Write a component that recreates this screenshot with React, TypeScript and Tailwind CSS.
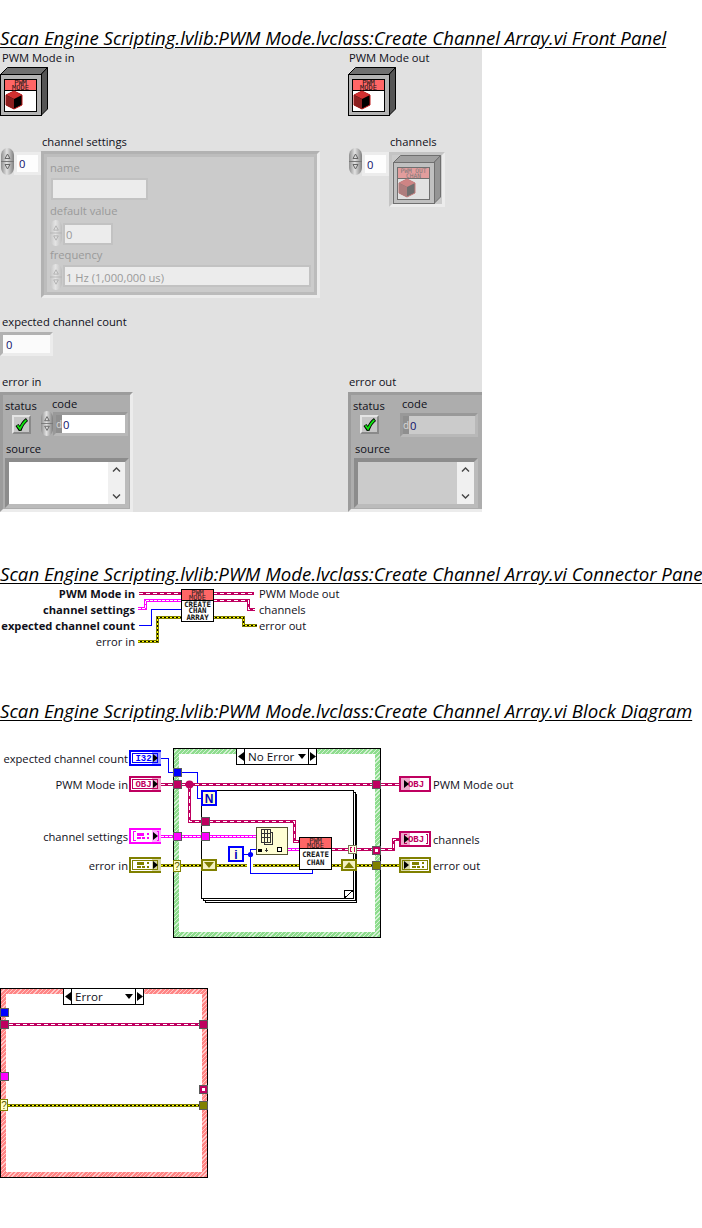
import React from "react";

const face = "font-['Open_Sans',sans-serif] text-[11.2px] whitespace-nowrap";
const lbl = `h-[16px] leading-[16px] text-[#10101a] ${face}`;
const bold = "h-[16px] leading-[16px] text-[#10101a] font-['Open_Sans',sans-serif] text-[11.2px] font-bold whitespace-nowrap";
const dim = `h-[16px] leading-[16px] text-[#9a9a9a] ${face}`;
const tag = `absolute h-[16px] leading-[16px] text-[#10101a] ${face}`;
const mono = "DejaVu Sans Mono, monospace";
const slab = "Liberation Mono, monospace";
const CLASS = "#bf0060";

function Heading({ children }: { children: React.ReactNode }) {
  return (
    <h2 className="h-[20px] whitespace-nowrap text-[18.65px] leading-[20px] italic underline underline-offset-[2px] font-['Open_Sans',sans-serif] text-black">
      {children}
    </h2>
  );
}

function Spinner({ className, faded }: { className: string; faded?: boolean }) {
  const id = faded ? "spinFaded" : "spinSolid";
  return (
    <svg viewBox="0 0 13 27" preserveAspectRatio="none" className={`shrink-0 ${className}`}>
      <defs>
        <linearGradient id={id} x1="0" x2="1" y1="0" y2="0">
          <stop offset="0" stopColor={faded ? "#c4c4c4" : "#8e8e8e"} />
          <stop offset="0.45" stopColor={faded ? "#e4e4e4" : "#e2e2e2"} />
          <stop offset="1" stopColor={faded ? "#bdbdbd" : "#7f7f7f"} />
        </linearGradient>
      </defs>
      <path d="M6.5 0C10 0 13 3 13 8V19C13 24 10 27 6.5 27S0 24 0 19V8C0 3 3 0 6.5 0Z" fill={`url(#${id})`} />
      <path d="M0 13.5H13" stroke={faded ? "#b5b5b5" : "#777"} />
      <path d="M6.5 6L9 10.5H4Z" fill="none" stroke={faded ? "#b0b0b0" : "#666"} />
      <path d="M6.5 21L9 16.5H4Z" fill="none" stroke={faded ? "#b0b0b0" : "#666"} />
    </svg>
  );
}

function ObjIcon({ className, lines }: { className: string; lines: string[] }) {
  const size = lines[0].length > 4 ? 6.2 : 7;
  return (
    <svg viewBox="0 0 48 49" className={`block ${className}`}>
      <path d="M0.5 7.5L7.5 0.5H47.5L41 7.5Z" fill="#707070" stroke="#000" />
      <path d="M41 7.5L47.5 0.5V42L41 48.5Z" fill="#555" stroke="#000" />
      <rect x="0.5" y="7.5" width="41" height="41" fill="#b4b4b4" stroke="#000" />
      <rect x="4.5" y="12.5" width="32" height="32" fill="#fff" stroke="#000" />
      <rect x="5" y="13" width="31" height="10" fill="#ff6666" />
      <path d="M5 23.5H36" stroke="#000" />
      <text x="20.5" y="17.8" textAnchor="middle" fontFamily={mono} fontSize={size} fill="#111">{lines[0]}</text>
      <text x="20.5" y="22.8" textAnchor="middle" fontFamily={mono} fontSize={size} fill="#111">{lines[1]}</text>
      <path d="M14 24L22 28V38L14 42L6 38V28Z" fill="#000" stroke="#c01818" />
      <path d="M14 24L22 28L14 32L6 28Z" fill="#d23030" />
      <path d="M6 28L14 32V42L6 38Z" fill="#8c1f1f" />
    </svg>
  );
}

function Check({ className }: { className: string }) {
  return (
    <div className={`w-[19px] h-[19px] border-2 border-t-[#e4e4e4] border-l-[#e4e4e4] border-r-[#8a8a8a] border-b-[#8a8a8a] bg-[#c6c6c6] flex items-center justify-center ${className}`}>
      <svg viewBox="0 0 13 13" className="w-[13px] h-[13px]">
        <path d="M2 7L5 11.5C6.5 7.5 8.5 4 12 1.5" fill="none" stroke="#000" strokeWidth="3.6" />
        <path d="M2.4 7.4L5 11C6.6 7.4 8.6 4.2 11.4 2" fill="none" stroke="#10e010" strokeWidth="1.8" />
      </svg>
    </div>
  );
}

function Scroll() {
  return (
    <div className="ml-auto w-[17px] h-full bg-[#f0f0f0] flex flex-col justify-between items-center py-[5px]">
      <svg viewBox="0 0 9 5" className="w-[9px] h-[5px]"><path d="M1 4.5L4.5 1L8 4.5" fill="none" stroke="#444" strokeWidth="1.4" /></svg>
      <svg viewBox="0 0 9 5" className="w-[9px] h-[5px]"><path d="M1 0.5L4.5 4L8 0.5" fill="none" stroke="#444" strokeWidth="1.4" /></svg>
    </div>
  );
}

function ErrorCluster({ out }: { out?: boolean }) {
  return (
    <div className={`h-[120px] border-[3px] border-t-[#9c9c9c] border-l-[#9c9c9c] border-r-[#ececec] border-b-[#ececec] bg-[#adadad] ${out ? "w-[137px]" : "w-[133px]"}`}>
      <div className="flex h-[46px]">
        <div className={out ? "w-[49px] pl-[2px] pt-[3px]" : "w-[38px] pl-[2px] pt-[3px]"}>
          <div className={lbl}>status</div>
          <Check className="ml-[7px] mt-[1px]" />
        </div>
        <div className="pt-[1px]">
          <div className={`${lbl} ${out ? "ml-[2px]" : "ml-[11px]"}`}>code</div>
          <div className={`flex ${out ? "" : "-mt-[1px]"}`}>
            {!out && <Spinner className="w-[12px] h-[25px]" />}
            <div className={`h-[24px] mt-[1px] border-[3px] border-t-[#999999] border-l-[#999999] border-r-[#b8b8b8] border-b-[#b8b8b8] flex bg-[#8f8f8f] ${out ? "w-[78px]" : "w-[75px]"}`}>
              <span className="w-[6px] text-[10px] leading-[18px] text-[#d8d8d8] font-['Open_Sans',sans-serif]">d</span>
              <span className={`flex-1 pl-[1px] leading-[19px] text-[#10106a] ${face} ${out ? "bg-[#cbcbcb]" : "bg-white"}`}>0</span>
            </div>
          </div>
        </div>
      </div>
      <div className={`${lbl} ${out ? "ml-[4px]" : "ml-[3px]"}`}>source</div>
      <div className={`w-[124px] h-[50px] mt-[1px] border-[4px] border-t-[#8c8c8c] border-l-[#8c8c8c] border-r-[#bbbbbb] border-b-[#bbbbbb] flex ${out ? "ml-[3px] bg-[#cbcbcb]" : "ml-[2px] bg-white"}`}>
        <Scroll />
      </div>
    </div>
  );
}

function Field({ className, children }: { className: string; children?: React.ReactNode }) {
  return (
    <div className={`h-[22px] border-[2px] border-[#c2c2c2] bg-[#ececec] pl-[1px] leading-[19px] text-[#9a9a9a] ${face} ${className}`}>
      {children}
    </div>
  );
}

function Panel() {
  return (
    <div className="flex w-[482px] h-[464px] bg-[#e1e1e1] overflow-hidden">
      <div className="w-[348px] shrink-0 pt-[2px]">
        <div className={`${lbl} ml-[2px]`}>PWM Mode in</div>
        <ObjIcon className="mt-[1px] w-[48px] h-[49px]" lines={["PWM", "MODE"]} />
        <div className={`${lbl} ml-[42px] mt-[18px]`}>channel settings</div>
        <div className="flex -mt-[2px]">
          <Spinner className="ml-[1px] w-[13px] h-[27px]" />
          <div className={`w-[27px] h-[23px] mt-[4px] border-[3px] border-[#ececec] bg-[#fdfdfd] pl-[2px] leading-[18px] text-[#10106a] ${face}`}>0</div>
          <div className="w-[279px] h-[147px] mt-[3px] border-[3px] border-t-[#b2b2b2] border-l-[#b2b2b2] border-r-[#ececec] border-b-[#ececec]">
            <div className="h-full border-[3px] border-t-[#bdbdbd] border-l-[#bdbdbd] border-r-[#bbbbbb] border-b-[#bbbbbb] bg-[#cbcbcb] pl-[3px] pt-[3px]">
              <div className={dim}>name</div>
              <Field className="w-[97px] mt-[2px] ml-[1px]" />
              <div className={`${dim} mt-[3px]`}>default value</div>
              <div className="flex mt-[1px]">
                <Spinner faded className="w-[12px] h-[26px]" />
                <Field className="w-[50px] mt-[3px] ml-[1px]">0</Field>
              </div>
              <div className={`${dim} mt-[1px]`}>frequency</div>
              <div className="flex mt-[1px]">
                <Spinner faded className="w-[12px] h-[26px]" />
                <Field className="w-[248px] mt-[1px] ml-[1px]"><span className="block leading-[21px]">1 Hz (1,000,000 us)</span></Field>
              </div>
            </div>
          </div>
        </div>
        <div className={`${lbl} ml-[2px] mt-[16px]`}>expected channel count</div>
        <div className={`w-[53px] h-[24px] mt-[2px] border-[3px] border-t-[#b2b2b2] border-l-[#b2b2b2] border-r-[#ececec] border-b-[#ececec] bg-[#fbfbfb] pl-[3px] leading-[19px] text-[#10106a] ${face}`}>0</div>
        <div className={`${lbl} ml-[2px] mt-[18px]`}>error in</div>
        <div className="mt-[2px]"><ErrorCluster /></div>
      </div>
      <div className="shrink-0 pt-[2px]">
        <div className={`${lbl} ml-[1px]`}>PWM Mode out</div>
        <ObjIcon className="mt-[1px] w-[48px] h-[49px]" lines={["PWM", "MODE"]} />
        <div className={`${lbl} ml-[42px] mt-[18px]`}>channels</div>
        <div className="flex -mt-[2px]">
          <Spinner className="ml-[1px] w-[13px] h-[27px]" />
          <div className={`w-[27px] h-[24px] mt-[4px] border-[3px] border-[#ececec] bg-[#fdfdfd] pl-[2px] leading-[19px] text-[#10106a] ${face}`}>0</div>
          <div className="w-[56px] h-[55px] mt-[4px] border-[3px] border-t-[#c4c4c4] border-l-[#c4c4c4] border-r-[#ececec] border-b-[#ececec] bg-[#cbcbcb] pl-[1px]">
            <ObjIcon className="w-[48px] h-[49px] opacity-45" lines={["PWM OUT", "CHAN"]} />
          </div>
        </div>
        <div className={`${lbl} ml-[1px] mt-[167px]`}>error out</div>
        <div className="mt-[2px]"><ErrorCluster out /></div>
      </div>
    </div>
  );
}

function ClassWire({ d }: { d: string }) {
  return (
    <g fill="none" shapeRendering="crispEdges">
      <path d={d} stroke={CLASS} strokeWidth="3" />
      <path d={d} stroke="#fff" strokeWidth="1" strokeDasharray="4 3" />
    </g>
  );
}
function PinkWire({ d }: { d: string }) {
  return (
    <g fill="none" shapeRendering="crispEdges">
      <path d={d} stroke="#ff00ff" strokeWidth="3" />
      <path d={d} stroke="#fff" strokeWidth="1" strokeDasharray="3 1" />
    </g>
  );
}
function ErrWire({ d }: { d: string }) {
  return (
    <g fill="none" shapeRendering="crispEdges">
      <path d={d} stroke="#808000" strokeWidth="3" />
      <path d={d} stroke="#000" strokeWidth="1" />
      <path d={d} stroke="#ffff00" strokeWidth="1" strokeDasharray="2 2" />
    </g>
  );
}
function BlueWire({ d }: { d: string }) {
  return <path d={d} fill="none" stroke="#0000ff" strokeWidth="1" shapeRendering="crispEdges" />;
}

function Vi({ x, y, lines, first, step }: { x: number; y: number; lines: string[]; first: number; step: number }) {
  return (
    <g>
      <rect x={x + 0.5} y={y + 0.5} width="32" height="32" fill="#fff" stroke="#000" />
      <rect x={x + 1} y={y + 1} width="31" height="10" fill="#ff6666" />
      <path d={`M${x + 1} ${y + 11.5}H${x + 32}`} stroke="#000" />
      <text x={x + 16.5} y={y + 5.8} textAnchor="middle" fontFamily={mono} fontSize="7" fill="#222">PWM</text>
      <text x={x + 16.5} y={y + 10.8} textAnchor="middle" fontFamily={mono} fontSize="7" fill="#222">MODE</text>
      {lines.map((l, i) => (
        <text key={l} x={x + 16.5} y={y + first + i * step} textAnchor="middle" fontFamily={mono} fontSize="7.4" fontWeight="700" fill="#111">{l}</text>
      ))}
    </g>
  );
}

function Connector() {
  return (
    <div className="relative h-[117px] flex pt-[2px]">
      <div className="w-[135px] flex flex-col text-right">
        <div className={bold}>PWM Mode in</div>
        <div className={bold}>channel settings</div>
        <div className={bold}>expected channel count</div>
        <div className={lbl}>error in</div>
      </div>
      <div className="ml-[124px] flex flex-col">
        <div className={lbl}>PWM Mode out</div>
        <div className={lbl}>channels</div>
        <div className={lbl}>error out</div>
      </div>
      <svg viewBox="0 584 702 117" className="absolute inset-0 w-[702px] h-[117px]">
        <ClassWire d="M139 593.5H181" />
        <PinkWire d="M138 608.5H145.5V600.5H181" />
        <BlueWire d="M139 625.5H151.5V609.5H181" />
        <ErrWire d="M138 641.5H157.5V617.5H181" />
        <ClassWire d="M213 593.5H254" />
        <ClassWire d="M213 600.5H248.5V609.5H255" />
        <ErrWire d="M213 617.5H243.5V625.5H257" />
        <Vi x={181} y={589} first={17.8} step={6.5} lines={["CREATE", "CHAN", "ARRAY"]} />
      </svg>
    </div>
  );
}

function Selector({ className, label }: { className: string; label: string }) {
  return (
    <div className={`absolute h-[17px] w-[81px] border border-black bg-white flex ${className}`}>
      <div className="w-[8px] border-r border-black flex items-center justify-center">
        <svg viewBox="0 0 6 9" className="w-[6px] h-[9px]"><path d="M6 0V9L0 4.5Z" fill="#000" /></svg>
      </div>
      <div className="flex-1 flex items-center pl-[3px] pr-[2px] text-[11.6px] leading-[15px] text-[#10101a] font-['Open_Sans',sans-serif]">
        <span className="flex-1">{label}</span>
        <svg viewBox="0 0 8 5" className="w-[8px] h-[5px]"><path d="M0 0H8L4 5Z" fill="#000" /></svg>
      </div>
      <div className="w-[8px] border-l border-black flex items-center justify-center">
        <svg viewBox="0 0 6 9" className="w-[6px] h-[9px]"><path d="M0 0V9L6 4.5Z" fill="#000" /></svg>
      </div>
    </div>
  );
}

function Tun({ x, y, fill, h = 9, w = 9, dot }: { x: number; y: number; fill: string; h?: number; w?: number; dot?: boolean }) {
  return (
    <g>
      <rect x={x + 0.5} y={y + 0.5} width={w - 1} height={h - 1} fill={fill} stroke="#5a5a5a" />
      {dot && <rect x={x + 3} y={y + 3} width={w - 6} height={h - 6} fill="#fff" />}
    </g>
  );
}

function Question({ x, y }: { x: number; y: number }) {
  return (
    <g>
      <rect x={x + 0.5} y={y + 0.5} width="7" height="11" fill="#ffffc8" stroke="#808000" />
      <text x={x + 4} y={y + 9.5} textAnchor="middle" fontFamily="Liberation Sans, sans-serif" fontSize="10" fill="#555500">?</text>
    </g>
  );
}

function Term({ x, y, color, tint, kind, out }: { x: number; y: number; color: string; tint: string; kind: "i32" | "obj" | "arr" | "err" | "objarr"; out?: boolean }) {
  const inner = out ? 0 : 21;
  return (
    <g transform={`translate(${x} ${y})`} shapeRendering="crispEdges">
      <rect x="1" y="1" width="30" height="14" fill="#fff" stroke={color} strokeWidth="2" />
      <rect x={inner + 2} y="2" width="9" height="12" fill={tint} />
      {kind === "i32" && <rect x="3.5" y="3.5" width="25" height="9" fill="none" stroke={color} />}
      {kind === "obj" && !out && <rect x="3.5" y="3.5" width="25" height="9" fill="none" stroke={color} />}
      {(kind === "i32" || kind === "obj" || kind === "objarr") && (
        <text x={out ? 17 : 14.5} y="11" textAnchor="middle" fontFamily={slab} fontSize="9" fontWeight="700" fill={color} shapeRendering="auto">
          {kind === "i32" ? "I32" : "OBJ"}
        </text>
      )}
      {kind === "objarr" && <path d="M7.5 3.5H5.5V12.5H7.5M26.5 3.5H28.5V12.5H26.5" fill="none" stroke={color} />}
      {(kind === "arr" || kind === "err") && (
        <g fill={color}>
          {kind === "arr" && <path d="M6.5 3.5H4.5V12.5H6.5M27.5 3.5H29.5V12.5H27.5" fill="none" stroke={color} />}
          {kind === "err" && <rect x="3.5" y="3.5" width="25" height="9" fill="none" stroke={color} />}
          <rect x={out ? 13 : 8} y="5" width="7" height="3" />
          <rect x={out ? 13 : 8} y="9" width="4" height="2" />
          <rect x={out ? 18 : 13} y="9" width="3" height="2" />
          <rect x={out ? 23 : 18} y="5" width="2" height="2" />
          <rect x={out ? 23 : 18} y="9" width="2" height="2" />
        </g>
      )}
      {out ? <path d="M5 4V12L10 8Z" fill="#000" shapeRendering="auto" /> : <path d="M24 4V12L29 8Z" fill="#000" shapeRendering="auto" />}
    </g>
  );
}

function Shift({ x, y, up }: { x: number; y: number; up?: boolean }) {
  return (
    <g shapeRendering="crispEdges">
      <rect x={x + 1} y={y + 1} width="14" height="10" fill="#f4f2c4" stroke="#808000" strokeWidth="2" />
      <path d={up ? `M${x + 3} ${y + 9}H${x + 13}L${x + 8} ${y + 3}Z` : `M${x + 3} ${y + 3}H${x + 13}L${x + 8} ${y + 9}Z`} fill="#808000" shapeRendering="auto" />
    </g>
  );
}

function Diagram() {
  return (
    <div className="relative h-[217px]">
      <div className={`${tag} left-0 w-[128px] text-right top-[30px]`}>expected channel count</div>
      <div className={`${tag} left-0 w-[128px] text-right top-[56px]`}>PWM Mode in</div>
      <div className={`${tag} left-0 w-[128px] text-right top-[108px]`}>channel settings</div>
      <div className={`${tag} left-0 w-[128px] text-right top-[137px]`}>error in</div>
      <div className={`${tag} left-[433px] top-[56px]`}>PWM Mode out</div>
      <div className={`${tag} left-[433px] top-[111px]`}>channels</div>
      <div className={`${tag} left-[433px] top-[137px]`}>error out</div>

      <div className="absolute left-[173px] top-[27px] w-[208px] h-[190px] border border-black p-[5px] bg-[repeating-linear-gradient(135deg,#8edc8e_0px,#8edc8e_2px,#d4f2d4_2px,#d4f2d4_3px)]">
        <div className="h-full bg-white" />
      </div>
      <Selector className="left-[236px] top-[27px]" label="No Error" />
      <div className="absolute left-[205px] top-[73px] w-[152px] h-[109px] border border-black bg-white" />
      <div className="absolute left-[203px] top-[71px] w-[153px] h-[109px] border border-black bg-white" />
      <div className="absolute left-[201px] top-[69px] w-[153px] h-[109px] border border-black bg-white" />

      <svg viewBox="0 721 702 217" className="absolute inset-0 w-[702px] h-[217px]">
        <BlueWire d="M161 758.5H168.5V772.5H174M182 772.5H197.5V798.5H202" />
        <ClassWire d="M161 784.5H173M181 784.5H372M189.5 784.5V821.5H201M209 821.5H294.5V841.5H299" />
        <PinkWire d="M161 836.5H173M181 836.5H201M209 836.5H256" />
        <PinkWire d="M288 849.5H299" />
        <ErrWire d="M161 865.5H173M181 865.5H201M217 865.5H247M253 865.5H299M331 865.5H341M357 865.5H372M381 865.5H399" />
        <ClassWire d="M331 849.5H348M357 849.5H372M381 849.5H393.5V839.5H399M381 784.5H399" />
        <BlueWire d="M244 854.5H250.5V849.5H256M250.5 854.5V873.5H312.5V869" />
        <circle cx="250.5" cy="854.5" r="2.6" fill="#0000ff" />
        <circle cx="189.5" cy="784.5" r="4" fill={CLASS} />

        <Term x={129} y={750} color="#0000ff" tint="#9a9aff" kind="i32" />
        <Term x={129} y={776} color={CLASS} tint="#eeaacc" kind="obj" />
        <Term x={129} y={828} color="#ff00ff" tint="#ffb0ff" kind="arr" />
        <Term x={129} y={857} color="#808000" tint="#d8d8a8" kind="err" />
        <Term x={399} y={776} color={CLASS} tint="#eeaacc" kind="obj" out />
        <Term x={399} y={831} color={CLASS} tint="#eeaacc" kind="objarr" out />
        <Term x={399} y={857} color="#808000" tint="#d8d8a8" kind="err" out />

        <Tun x={173} y={768} fill="#0000ff" />
        <Tun x={173} y={780} fill={CLASS} />
        <Tun x={173} y={832} fill="#ff00ff" />
        <Question x={173} y={860} />
        <Tun x={372} y={780} fill={CLASS} />
        <Tun x={372} y={846} fill={CLASS} dot />
        <Tun x={372} y={861} fill="#808000" />

        <g shapeRendering="crispEdges">
          <rect x="202" y="791" width="14" height="14" fill="#ffffc8" stroke="#0000ff" strokeWidth="2" />
          <rect x="229" y="847" width="14" height="14" fill="#ffffe8" stroke="#0000ff" strokeWidth="2" />
        </g>
        <text x="209" y="803" textAnchor="middle" fontFamily="Liberation Sans, sans-serif" fontSize="12" fontWeight="700" fill="#0000c0">N</text>
        <text x="236" y="859" textAnchor="middle" fontFamily="Liberation Sans, sans-serif" fontSize="12" fontWeight="700" fill="#0000c0">i</text>

        <Tun x={201} y={817} fill={CLASS} />
        <Tun x={201} y={832} fill="#ff00ff" />
        <Shift x={201} y={859} />
        <Shift x={341} y={859} up />

        <path d="M344.5 898V890.5H353L344.5 898" fill="#fff" stroke="#000" shapeRendering="crispEdges" />

        <g shapeRendering="crispEdges">
          <rect x="256.5" y="827.5" width="31" height="27" fill="#ffffd4" stroke="#555533" />
          <path d="M261.5 829.5H270.5V842.5H261.5ZM264.5 829.5V842.5M267.5 829.5V842.5M261.5 833.5H270.5M261.5 837.5H270.5M270.5 832.5H272.5V844.5H264.5V842.5" fill="none" stroke="#333" />
          <rect x="258" y="849" width="4" height="3" fill="#000" />
          <path d="M265 850.5H268M266.5 848V852" stroke="#333" />
          <rect x="277.5" y="847.5" width="4" height="4" fill="#fff" stroke="#000" />
        </g>

        <Vi x={299} y={837} first={20} step={8} lines={["CREATE", "CHAN"]} />

        <g shapeRendering="crispEdges">
          <rect x="348.5" y="845.5" width="8" height="8" fill="#ffffe0" stroke="#777755" />
          <path d="M351.5 847.5H350.5V851.5H351.5M353.5 847.5H354.5V851.5H353.5" fill="none" stroke={CLASS} />
        </g>
      </svg>
    </div>
  );
}

function ErrorCase() {
  return (
    <div className="relative mt-[50px] w-[208px] h-[190px] border border-black p-[5px] bg-[repeating-linear-gradient(135deg,#ff8585_0px,#ff8585_2px,#ffc8c8_2px,#ffc8c8_3px)]">
      <div className="h-full bg-white" />
      <Selector className="-left-px -top-px ml-[63px]" label="Error" />
      <svg viewBox="0 988 208 190" className="absolute -left-px -top-px w-[208px] h-[190px]">
        <ClassWire d="M9 1024.5H199" />
        <ErrWire d="M8 1105.5H199" />
        <Tun x={0} y={1008} fill="#0000ff" />
        <Tun x={0} y={1020} fill={CLASS} />
        <Tun x={0} y={1072} fill="#ff00ff" />
        <Question x={0} y={1099} />
        <Tun x={199} y={1020} fill={CLASS} />
        <Tun x={199} y={1085} fill={CLASS} dot />
        <Tun x={199} y={1101} fill="#808000" />
      </svg>
    </div>
  );
}

export default function App() {
  return (
    <div className="w-[702px] min-h-[1228px] bg-white pt-[28px] overflow-hidden">
      <Heading>Scan Engine Scripting.lvlib:PWM Mode.lvclass:Create Channel Array.vi Front Panel</Heading>
      <Panel />
      <div className="mt-[52px]">
        <Heading>Scan Engine Scripting.lvlib:PWM Mode.lvclass:Create Channel Array.vi Connector Pane</Heading>
      </div>
      <Connector />
      <Heading>Scan Engine Scripting.lvlib:PWM Mode.lvclass:Create Channel Array.vi Block Diagram</Heading>
      <Diagram />
      <ErrorCase />
    </div>
  );
}
